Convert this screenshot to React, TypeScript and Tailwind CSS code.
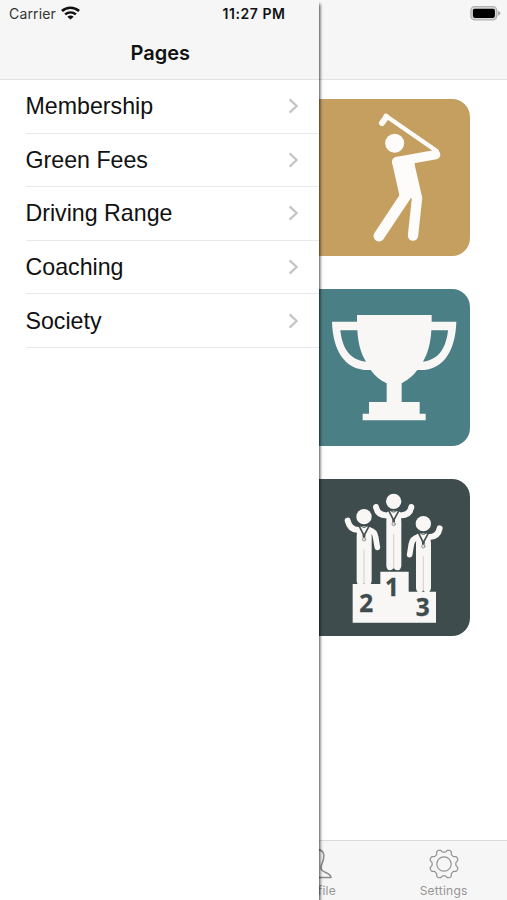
import React from "react";

const pages = ["Membership", "Green Fees", "Driving Range", "Coaching", "Society"];

function Wifi() {
  return (
    <svg width="19" height="14" viewBox="0 0 18 14" preserveAspectRatio="none" fill="none" stroke="#111" strokeWidth="2.5">
      <path d="M.9 5 C5.5 .6 12.5 .6 17.1 5" />
      <path d="M3.9 8.4 C7 5.7 11 5.7 14.1 8.4" />
      <path d="M9 13.6 L6 10.7 Q9 8.4 12 10.7 Z" fill="#111" stroke="none" />
    </svg>
  );
}

function Battery() {
  return (
    <svg width="31" height="15" viewBox="0 0 31 15">
      <rect x=".9" y=".7" width="25.8" height="13.2" rx="3.8" fill="#d8d8d8" stroke="#b2b2b2" strokeWidth="1.3" />
      <rect x="2.9" y="2.7" width="22" height="9.2" rx="1.8" fill="#000" />
      <path d="M27.8 4.8 Q30.4 5.6 30.4 7.3 Q30.4 9 27.8 9.8 Z" fill="#aaa" />
    </svg>
  );
}

function Golfer() {
  return (
    <svg width="152" height="157" viewBox="24 26 456 471" fill="none" stroke="#fdfcfa" strokeLinecap="round" strokeLinejoin="round">
      <circle cx="254" cy="159" r="28.5" fill="#fdfcfa" stroke="none" />
      <path d="M216 98 L229 80" strokeWidth="18" />
      <path d="M227 76 L380 182" strokeWidth="13" />
      <path d="M260 214 L377 193" strokeWidth="28" />
      <path d="M246 216 Q247 200 264 199 L312 205 L315 228 L337 323 L326 355 L303 322 L278 350 L268 314 Z" fill="#fdfcfa" stroke="none" />
      <path d="M286 318 L207 437" strokeWidth="33" />
      <path d="M321 325 L309 436" strokeWidth="31" />
    </svg>
  );
}

function Trophy() {
  return (
    <svg width="152" height="157" viewBox="24 26 456 471" fill="#f9f6f6">
      <path d="M141 104 H365 V124 H439 C437 205 404 274 322 269 Q305 293 275 309 V365 H329 V400 H347 V420 H158 V400 H177 V365 H230 V309 Q200 295 182 269 C101 273 68 204 66 124 H141 Z" />
      <path d="M91 150 H142 C144 188 152 219 168 244 C118 240 96 200 91 150 Z M364 150 H414 C409 201 387 239 339 244 C354 219 362 188 364 150 Z" fill="#4a7f85" />
    </svg>
  );
}

function Winner({ x, y, raised, lowered }: { x: number; y: number; raised: string; lowered?: string }) {
  return (
    <g transform={`translate(${x} ${y})`} fill="#f8f7f6" stroke="#f8f7f6" strokeLinecap="round" strokeLinejoin="round">
      <circle r="23" stroke="none" />
      <path d={raised} fill="none" strokeWidth="18" />
      {lowered && <path d={lowered} fill="none" strokeWidth="17" />}
      <path d="M-20 32 Q0 25 20 32 L23 60 V193 Q21 207 11 207 Q4 207 0 200 Q-4 207 -12 207 Q-21 205 -22 193 V60 Z" stroke="none" />
      <path d="M0 99 V201" stroke="#bdbebb" strokeWidth="2" />
      <path d="M-15 27 L0 57 L16 27" fill="none" stroke="#444f4f" strokeWidth="5" />
      <path d="M-9 28 Q0 37 9 28" fill="none" stroke="#444f4f" strokeWidth="3" />
      <path d="M0 56 V61" stroke="#444f4f" strokeWidth="8" />
      <circle cy="68" r="5" fill="#e7e5e4" stroke="#858987" strokeWidth="2.5" />
    </g>
  );
}

function Podium() {
  return (
    <svg width="152" height="157" viewBox="24 26 456 471">
      <Winner x={251} y={93} raised="M-16 42 Q-48 44 -53 17 M16 42 Q48 44 53 17" />
      <Winner x={162} y={139} raised="M-14 40 Q-42 42 -49 12" lowered="M15 40 Q33 44 35 62 L40 92" />
      <Winner x={340} y={160} raised="M14 40 Q43 42 49 14" lowered="M-15 40 Q-33 44 -36 62 L-41 93" />
      <path d="M128 341 H211 V304 H296 V364 H378 V457 H128 Z" fill="#f8f7f6" />
      <g fill="#3f4c4d" stroke="#3f4c4d" strokeWidth="1" fontFamily="Open Sans, sans-serif" fontWeight="700" fontSize="73" textAnchor="middle">
        <text x="169" y="424">2</text>
        <text x="246" y="378">1</text>
        <text x="338" y="438">3</text>
      </g>
    </svg>
  );
}

const gearOutline =
  Array.from({ length: 160 }, (_, i) => {
    const a = (i / 160) * Math.PI * 2;
    const r = 13.2 - 1.4 * Math.tanh(2 * Math.cos(8 * a));
    return `${i ? "L" : "M"}${(16 + r * Math.sin(a)).toFixed(2)} ${(16 - r * Math.cos(a)).toFixed(2)}`;
  }).join(" ") + " Z";

function Gear() {
  return (
    <svg width="32" height="32" viewBox="0 0 32 32" fill="none" stroke="#929292" strokeWidth="1.2">
      <path d={gearOutline} />
      <circle cx="16" cy="16" r="7.2" />
    </svg>
  );
}

function Person() {
  return (
    <svg width="32" height="32" viewBox="0 0 32 32" fill="none" stroke="#8c8c8c" strokeWidth="1.5">
      <path d="M16 1.5 C22 1.5 24 6 22.5 11 C21.8 15 20 16 20 20 C20 25 29.5 24 30 29.5 H2 C2.5 24 12 25 12 20 C12 16 10.2 15 9.5 11 C8 6 10 1.5 16 1.5 Z" />
    </svg>
  );
}

export default function App() {
  return (
    <div className="flex h-[900px] w-[507px] overflow-hidden bg-white font-[Inter,sans-serif] text-[#111]">
      <aside className="relative z-10 flex w-[318.5px] shrink-0 flex-col bg-white shadow-[1px_4px_3px_rgba(0,0,0,0.75)]">
        <header className="flex h-[80px] shrink-0 flex-col border-b border-[#e2e2e2] bg-[#f6f6f6]">
          <div className="flex h-[27px] items-center pl-[9px] pr-[33px]">
            <span className="text-[14px] tracking-[0.15px] text-[#333]">Carrier</span>
            <span className="ml-[5px] -mt-[1px]"><Wifi /></span>
            <span className="ml-auto whitespace-nowrap text-[14px] font-semibold tracking-[0.55px]">11:27 PM</span>
          </div>
          <h1 className="mt-[11px] pl-[2px] text-center text-[20px] font-semibold leading-[30px]">Pages</h1>
        </header>
        <ul className="pl-[25.5px]">
          {pages.map((p) => (
            <li key={p} className="flex h-[53.6px] items-center justify-between border-b border-[#e9e9e9] pr-[19.5px]">
              <span className="font-['Liberation_Sans',Arial,sans-serif] text-[23.2px] leading-[30px]">{p}</span>
              <svg width="11" height="18" viewBox="0 0 11 18" fill="none" stroke="#c4c4c6" strokeWidth="2.2">
                <path d="M1.6 2.4 L8.6 9 L1.6 15.6" />
              </svg>
            </li>
          ))}
        </ul>
      </aside>
      <main className="flex min-w-0 flex-1 flex-col">
        <header className="flex h-[80px] shrink-0 items-start justify-end border-b border-[#e2e2e2] bg-[#f6f6f6] pr-[6px] pt-[6px]">
          <Battery />
        </header>
        <div className="flex flex-1 flex-col gap-[33px] pt-[18.6px]">
          <div className="-ml-[0.5px] h-[157px] w-[152px] overflow-hidden rounded-r-[18px] bg-[#c49f60]"><Golfer /></div>
          <div className="-ml-[0.5px] h-[157px] w-[152px] overflow-hidden rounded-r-[18px] bg-[#4a7f85]"><Trophy /></div>
          <div className="-ml-[0.5px] h-[157px] w-[152px] overflow-hidden rounded-r-[18px] bg-[#3f4c4d]"><Podium /></div>
        </div>
        <nav className="-ml-[65px] flex h-[60px] shrink-0 border-t border-[#d9d9d9] bg-[#f6f6f6] text-[12px] tracking-[0.25px] text-[#959595]">
          <div className="flex w-[126.75px] shrink-0 flex-col items-center pt-[7px]">
            <Person />
            <span className="mt-[3px] leading-[16px]">Profile</span>
          </div>
          <div className="flex w-[126.75px] shrink-0 flex-col items-center pt-[7px]">
            <Gear />
            <span className="mt-[3px] leading-[16px]">Settings</span>
          </div>
        </nav>
      </main>
    </div>
  );
}
